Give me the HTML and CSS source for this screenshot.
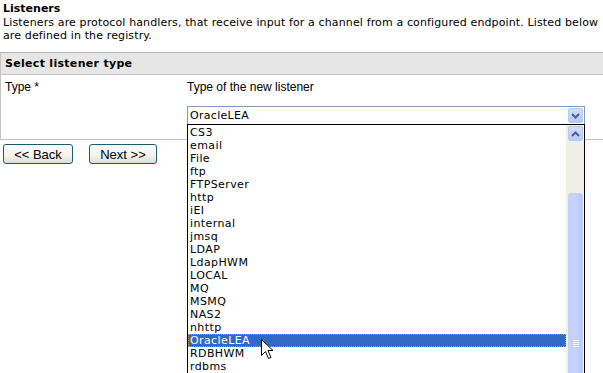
FILE: index.html
```html
<!DOCTYPE html>
<html>
<head>
<meta charset="utf-8">
<link rel="stylesheet" href="styles.css">
</head>
<body>
<div class="page">
  <h1 class="title">Listeners</h1>
  <p class="desc">Listeners are protocol handlers, that receive input for a channel from a configured endpoint. Listed below are defined in the registry.</p>
  <div class="section">
    <div class="section-head">Select listener type</div>
    <div class="row">
      <div class="label">Type *</div>
      <div class="field">
        <div class="hint">Type of the new listener</div>
        <div class="select">
          <span class="select-value">OracleLEA</span>
          <span class="select-btn">
            <svg width="9" height="6" viewBox="0 0 9 6"><path d="M1 1 L4.5 4.5 L8 1" fill="none" stroke="#4d6185" stroke-width="2"/></svg>
          </span>
        </div>
      </div>
    </div>
  </div>
  <div class="buttons">
    <button class="btn btn-back">&lt;&lt; Back</button>
    <button class="btn btn-next">Next &gt;&gt;</button>
  </div>
</div>

<div class="dropdown">
  <ul class="options">
    <li>CS3</li>
    <li>email</li>
    <li>File</li>
    <li>ftp</li>
    <li>FTPServer</li>
    <li>http</li>
    <li>iEI</li>
    <li>internal</li>
    <li>jmsq</li>
    <li>LDAP</li>
    <li>LdapHWM</li>
    <li>LOCAL</li>
    <li>MQ</li>
    <li>MSMQ</li>
    <li>NAS2</li>
    <li>nhttp</li>
    <li class="selected">OracleLEA</li>
    <li>RDBHWM</li>
    <li>rdbms</li>
  </ul>
  <div class="scrollbar">
    <div class="sb-up">
      <svg width="9" height="6" viewBox="0 0 9 6"><path d="M1 5 L4.5 1.5 L8 5" fill="none" stroke="#4d6185" stroke-width="2"/></svg>
    </div>
    <div class="sb-track"></div>
    <div class="sb-thumb">
      <div class="grip"></div>
    </div>
  </div>
</div>

<svg class="cursor" width="13" height="21" viewBox="0 0 13 21">
  <path d="M0.5 0.5 L0.5 16.5 L4.5 12.5 L7.5 19.5 L10 18.5 L7 11.5 L12 11.5 Z" fill="#fff" stroke="#000" stroke-width="1"/>
</svg>
</body>
</html>
```

FILE: styles.css
```css
html, body {
  margin: 0;
  padding: 0;
  background: #fff;
  overflow: hidden;
  width: 603px;
  height: 373px;
}

body {
  font-family: "DejaVu Sans", Verdana, sans-serif;
  font-size: 11px;
  color: #000;
  position: relative;
}

.page {
  padding: 2px 0 0 0;
}

.title {
  margin: 0 0 0 3px;
  font-size: 11px;
  font-weight: bold;
  line-height: 13px;
}

.desc {
  margin: 1px 0 0 3px;
  line-height: 13px;
  width: 600px;
  letter-spacing: 0.13px;
}

.section {
  margin-top: 10px;
  width: 640px;
  border: 1px solid #c3c3c3;
  border-top-color: #b5b5b5;
  height: 88px;
  box-sizing: border-box;
}

.section-head {
  height: 21px;
  background: #e6e6e6;
  border-bottom: 1px solid #c3c3c3;
  font-weight: bold;
  line-height: 21px;
  padding-left: 4px;
  letter-spacing: 0.3px;
}

.row {
  display: flex;
  padding-top: 5px;
}

.label {
  width: 182px;
  padding-left: 4px;
  font-family: "Liberation Sans", Arial, sans-serif;
  font-size: 12px;
  line-height: 14px;
}

.field {
  display: flex;
  flex-direction: column;
}

.hint {
  font-family: "Liberation Sans", Arial, sans-serif;
  font-size: 12px;
  line-height: 14px;
  height: 26px;
}

.select {
  width: 398px;
  height: 19px;
  box-sizing: border-box;
  border: 1px solid #7f9db9;
  display: flex;
  align-items: center;
  justify-content: space-between;
  padding-left: 2px;
  padding-right: 1px;
  background: #fff;
}

.select-value {
  line-height: 15px;
  letter-spacing: 0.3px;
}

.select-btn {
  width: 15px;
  height: 15px;
  box-sizing: border-box;
  border: 1px solid #b9cbf3;
  border-radius: 2px;
  background: linear-gradient(#d2defb, #b6c9f9);
  display: flex;
  align-items: center;
  justify-content: center;
}

.buttons {
  display: flex;
  gap: 16px;
  padding: 4px 0 0 3px;
}

.btn {
  font-family: "Liberation Sans", Arial, sans-serif;
  font-size: 13px;
  height: 20px;
  padding: 0;
  border: 1px solid #1e5a6c;
  border-radius: 3px;
  background: linear-gradient(#ffffff, #f4f3ee 60%, #dedbd0);
  color: #000;
}

.btn-back {
  width: 70px;
}

.btn-next {
  width: 68px;
}

.dropdown {
  position: absolute;
  left: 187px;
  top: 124px;
  width: 398px;
  height: 260px;
  box-sizing: border-box;
  border: 1px solid #000;
  background: #fff;
  display: flex;
}

.options {
  list-style: none;
  margin: 0;
  padding: 1px 0 0 0;
  flex: 1;
}

.options li {
  height: 13px;
  line-height: 13px;
  padding-left: 2px;
  white-space: nowrap;
  letter-spacing: 0.4px;
}

.options li.selected {
  background: #316ac5;
  color: #fff;
  outline: 1px dotted #d59b2a;
  outline-offset: -1px;
}

.scrollbar {
  width: 17px;
  border-left: 1px solid #f1efe2;
  display: flex;
  flex-direction: column;
  background: #f3f2ec;
  padding-top: 1px;
}

.sb-up {
  width: 15px;
  height: 15px;
  margin-left: 1px;
  box-sizing: border-box;
  border: 1px solid #b9cbf3;
  border-radius: 2px;
  background: linear-gradient(#d2defb, #b6c9f9);
  display: flex;
  align-items: center;
  justify-content: center;
}

.sb-track {
  height: 52px;
  background: #efeee8;
}

.sb-thumb {
  flex: 1;
  margin-left: 1px;
  width: 15px;
  box-sizing: border-box;
  border: 1px solid #c6d3f7;
  border-radius: 2px;
  background: linear-gradient(90deg, #c3d2fc, #c8d2fd 50%, #b3c8f7);
  position: relative;
}

.grip {
  position: absolute;
  left: 4px;
  top: 146px;
  width: 6px;
  height: 7px;
  background: repeating-linear-gradient(#eef3fd 0 1px, transparent 1px 2px);
}

.cursor {
  position: absolute;
  left: 261px;
  top: 339px;
}
```
